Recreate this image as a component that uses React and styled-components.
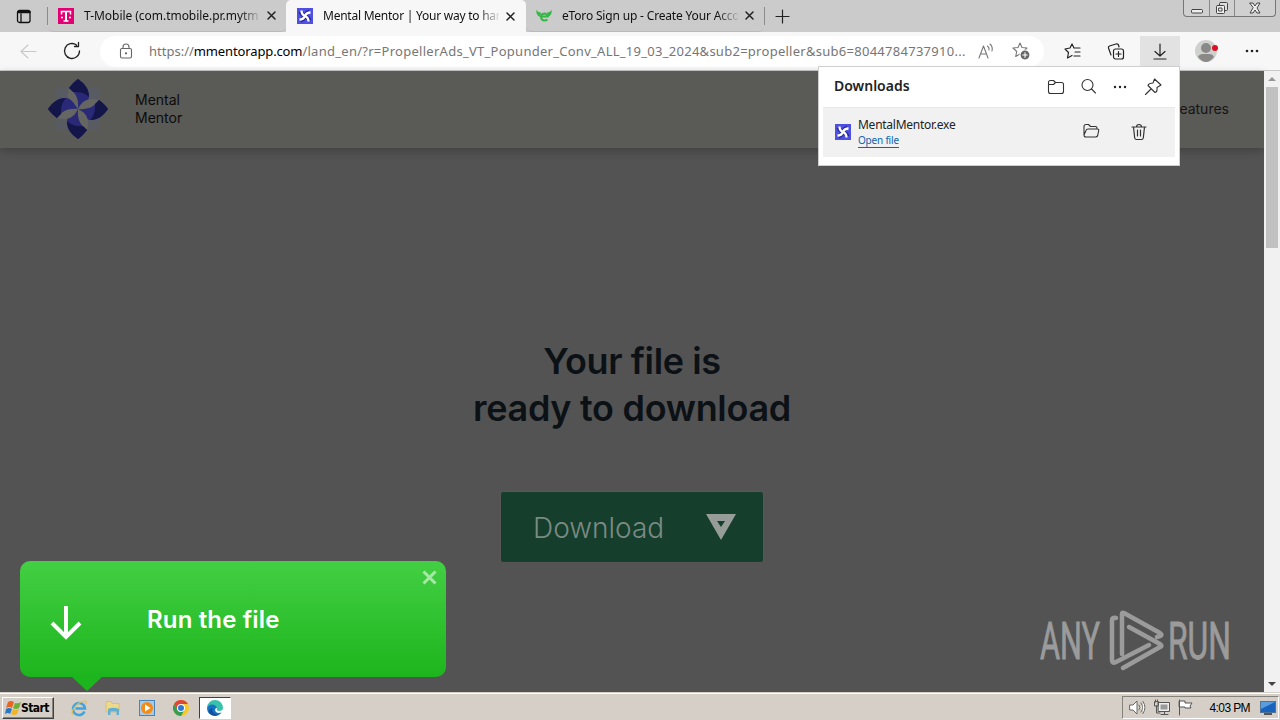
import React from "react";
import styled, { createGlobalStyle } from "styled-components";

const ui = '"Noto Sans", "Open Sans", sans-serif';
const site = 'Inter, "Open Sans", sans-serif';

const Global = createGlobalStyle`
  *{box-sizing:border-box}
  body{margin:0;width:1280px;height:720px;overflow:hidden;font-family:${ui};}
  svg{display:block;flex:none;overflow:visible}
`;

const Desktop = styled.div`width:1280px;height:720px;display:flex;flex-direction:column;position:relative;background:#535353;`;

/* ---------- tab strip ---------- */
const TabStrip = styled.div`height:32px;flex:none;display:flex;background:#cbcbcb;`;
const TabActions = styled.div`width:48px;display:flex;align-items:center;padding-left:16px;border-right:1px solid #8b8b8b;height:18px;margin-top:7px;`;
const Tab = styled.div`
  width:${(p) => p.$w}px;height:32px;display:flex;align-items:center;padding:0 ${(p) => p.$pr || 10}px 0 ${(p) => p.$pl}px;
  background:${(p) => (p.$active ? "#f7f7f7" : "#cbcbcb")};border-radius:${(p) => (p.$active ? "5px 5px 0 0" : "0 0 5px 5px")};
  ${(p) => !p.$active && "border-bottom:1px solid #bababa;"}
`;
const TabTitle = styled.div`
  width:176px;margin-left:10px;white-space:nowrap;font-size:12px;line-height:20px;color:#111;
  letter-spacing:${(p) => p.$ls}px;flex:none;
  mask-image:linear-gradient(90deg,#000 155px,transparent 178px);
`;
const CloseSlot = styled.div`margin-left:auto;`;
const NewTab = styled.div`height:18px;margin-top:7px;border-left:1px solid #8b8b8b;padding-left:10px;display:flex;align-items:center;`;
const WindowButtons = styled.div`margin:0 4px 0 auto;height:17px;display:flex;border:1px solid #777;border-top:0;border-radius:0 0 4px 4px;background:#d0d0d0;`;
const WindowButton = styled.div`width:${(p) => p.$w}px;display:flex;align-items:center;justify-content:center;& + &{border-left:1px solid #888;}`;

/* ---------- toolbar ---------- */
const Toolbar = styled.div`height:39px;flex:none;display:flex;align-items:center;background:#f7f7f7;border-bottom:1px solid #c7cac8;`;
const ToolSlot = styled.div`width:${(p) => p.$w}px;height:30px;display:flex;align-items:center;justify-content:center;background:${(p) => p.$bg || "transparent"};`;
const Address = styled.div`width:944px;height:31px;margin-left:7px;border-radius:16px;background:#fff;display:flex;align-items:center;padding:0 14px 0 19px;`;
const Url = styled.div`width:822px;margin-left:16px;white-space:nowrap;font-size:13px;line-height:20px;color:#767676;letter-spacing:.27px;b{font-weight:400;color:#000;letter-spacing:-.13px;}`;
const Scheme = styled.span`letter-spacing:0;`;
const AddressIcons = styled.div`display:flex;gap:17px;margin-left:auto;align-items:center;`;

/* ---------- page ---------- */
const Content = styled.div`flex:1;min-height:0;display:flex;`;
const Page = styled.main`width:1264px;background:#535353;font-family:${site};display:flex;flex-direction:column;align-items:center;`;
const PageHeader = styled.header`width:100%;height:77px;flex:none;display:flex;align-items:center;background:#5a5a56;padding:0 35px 2px 48px;box-shadow:0 3px 9px rgba(0,0,0,.22);`;
const Brand = styled.div`margin-left:27px;font-size:14px;line-height:18px;color:#0c0c0c;`;
const NavItem = styled.div`margin-left:auto;font-size:14px;color:#151515;`;
const Heading = styled.h1`margin:190px 0 0;font-size:36px;line-height:47px;font-weight:600;color:#0c1116;text-align:center;`;
const Line = styled.span`display:block;letter-spacing:${(p) => p.$ls}px;`;
const DownloadButton = styled.div`width:262px;height:70px;margin-top:60px;border-radius:2px;background:#153e2c;display:flex;align-items:center;padding:2px 27px 0 32px;justify-content:space-between;color:#7c8a82;font-size:28px;font-weight:300;box-shadow:0 0 2px #66605f;`;
const ButtonMark = styled.svg`margin-bottom:2px;`;

const Scrollbar = styled.div`width:16px;background:#f1f1f1;display:flex;flex-direction:column;align-items:center;`;
const ScrollArrow = styled.div`height:16px;display:flex;align-items:center;`;
const Thumb = styled.div`width:12px;height:161px;background:#c1c1c1;margin-bottom:auto;`;

/* ---------- downloads flyout ---------- */
const Flyout = styled.section`position:absolute;left:818px;top:66px;width:362px;height:100px;background:#fff;border:1px solid #cfcfcf;`;
const FlyoutHead = styled.div`height:40px;display:flex;align-items:center;padding:0 9px 1px 15px;`;
const FlyoutTitle = styled.div`font-size:14px;line-height:20px;font-weight:600;color:#222;margin-right:auto;padding-bottom:1px;`;
const FileRow = styled.div`height:50px;margin:0 4px;background:#f1f1f1;border-top:1px solid #e8e8e8;display:flex;align-items:center;padding:0 27px 2px 12px;`;
const FileText = styled.div`margin-left:7px;margin-right:auto;display:flex;flex-direction:column;align-items:flex-start;padding-top:2px;`;
const FileName = styled.div`font-size:12px;line-height:16px;color:#222;letter-spacing:-.26px;`;
const OpenLink = styled.div`font-size:10px;line-height:14px;color:#1064ad;border-bottom:1px solid #1064ad;letter-spacing:-.2px;`;
const FileActions = styled.div`display:flex;gap:30px;`;

/* ---------- run hint ---------- */
const Hint = styled.aside`position:absolute;left:20px;top:561px;width:426px;height:116px;border-radius:10px;background:linear-gradient(#43cf43,#1db51d);display:flex;align-items:center;padding:2px 0 0 30px;color:#fff;font:600 24px/30px ${site};
  &::after{content:"";position:absolute;left:51px;top:115px;border:solid transparent;border-width:15px 16px 0;border-top-color:#1db51d;}
`;
const HintText = styled.div`margin-left:65px;letter-spacing:.15px;`;
const HintClose = styled.div`position:absolute;right:9px;top:9px;`;
const Watermark = styled.div`position:absolute;left:1036px;top:608px;`;

/* ---------- taskbar ---------- */
const Taskbar = styled.footer`height:28px;flex:none;background:#d5cfc7;border-top:1px solid #d5cfc7;box-shadow:inset 0 1px #fff;display:flex;align-items:center;padding:2px 1px 0 2px;`;
const Start = styled.div`width:52px;height:22px;display:flex;align-items:center;padding-left:2px;border:1px solid;border-color:#fff #404040 #404040 #fff;box-shadow:inset -1px -1px #86827c;font:700 12px "DejaVu Sans Condensed","DejaVu Sans",sans-serif;letter-spacing:-.6px;color:#000;`;
const Launch = styled.div`display:flex;gap:18px;margin-left:17px;`;
const ActiveTask = styled.div`width:32px;height:22px;margin-left:10px;background:#fff;border:1px solid;border-color:#404040 #fff #fff #404040;display:flex;align-items:center;justify-content:center;`;
const Tray = styled.div`margin-left:auto;width:157px;height:23px;border:1px solid;border-color:#85817b #fff #fff #85817b;display:flex;align-items:center;padding:0 2px 0 6px;font:12px "Liberation Sans",sans-serif;color:#000;`;
const TrayIcons = styled.div`display:flex;gap:7px;`;
const Clock = styled.div`margin:0 10px 0 auto;letter-spacing:-.6px;white-space:nowrap;`;

const Svg = ({ w = 16, h = w, children, c = "#333", s = 1.1 }) => (
  <svg width={w} height={h} viewBox={`0 0 ${w} ${h}`} fill="none" stroke={c} strokeWidth={s} strokeLinecap="round" strokeLinejoin="round">{children}</svg>
);
const Cross = () => <Svg w={9} s={1.5} c="#222"><path d="M1 1l7 7M8 1L1 8" /></Svg>;
const Dots = ({ s = 1 }) => <Svg w={14} h={4}><g fill="#222" stroke="none"><circle cx="2" cy="2" r={s} /><circle cx="7" cy="2" r={s} /><circle cx="12" cy="2" r={s} /></g></Svg>;
const MentorIcon = () => (
  <svg width="16" height="16" viewBox="0 0 16 16"><rect width="16" height="16" fill="#5050e0" />
    <path d="M2.500 6Q5 4.500 8 8Q11 11.500 13.500 10M10 2.500Q11.500 5 8 8Q4.500 11 6 13.500" stroke="#2626a0" strokeWidth="4" fill="none" />
    <path d="M4.500 2.500Q4.500 6.500 8 8Q11.500 9.500 11.500 13.500M13.500 4.500Q9.500 4.500 8 8Q6.500 11.500 2.500 11.500" stroke="#fff" strokeWidth="2.300" fill="none" />
  </svg>
);
const MentorLogo = () => (
  <svg width="60" height="60" viewBox="0 0 60 60">
    <path d="M8 9H52V51H8Z" fill="#585b62" />
    {[0, 90, 180, 270].map((a) => (
      <g key={a} transform={`rotate(${a} 30 30)`}>
        <path d="M30 30C21 26 18 19 21 9C28 14 31 20 30 30Z" fill="#656561" />
        <path d="M30 30C31 20 28 14 21 9C24 5 27 2 30 0C37 5 41 10 41 17C41 24 35 26 30 30Z" fill="#292978" />
        <path d="M21 9C24 5 27 2 30 0C37 5 41 10 41 18C35 12 27 13 25 13Z" fill="#141548" />
      </g>
    ))}
  </svg>
);
const Folder = ({ open }) => (
  <Svg w={18} h={16}>
    {open ? <path d="M2 12V3.500Q2 1.500 4 1.500H6.500L8.500 3.500H13.500Q15 3.500 15 5V6M2 12L4 7.500Q4.500 6 6 6H15.500Q17 6 16.700 7.500L15.700 12.500Q15.300 14 13.500 14H4Q2 14 2 12" />
      : <path d="M1.500 3.500Q1.500 1.500 3.500 1.500H6.500L8.500 3.500H14.500Q16.500 3.500 16.500 5.500V12.500Q16.500 14.500 14.500 14.500H3.500Q1.500 14.500 1.500 12.500ZM1.500 5.500H6.500L8.500 3.500" />}
  </Svg>
);
const star = "M8 1L10 5.500L15 6L11.300 9.500L12.300 14.500L8 12L3.700 14.500L4.700 9.500L1 6L6 5.500Z";

export default function App() {
  return (
    <Desktop>
      <Global />
      <TabStrip>
        <TabActions><Svg w={15} h={15} s={1.3} c="#111"><rect x="1.500" y="1.500" width="12.500" height="12" rx="2" /><path d="M2 3.500H14M2 2.500h12M5 5V13" /></Svg></TabActions>
        <Tab $w={238} $pl={10}>
          <svg width="16" height="16"><rect width="16" height="16" fill="#e20074" /><path d="M3.500 6.500V3.500H12.500V6.500M5.500 13H10.500M3 9.500h2M11 9.500h2" stroke="#fff" strokeWidth="1.500" fill="none" /><path d="M8 3V13" stroke="#fff" strokeWidth="2" /></svg>
          <TabTitle $ls={-0.04}>T-Mobile (com.tmobile.pr.mytm</TabTitle><CloseSlot><Cross /></CloseSlot>
        </Tab>
        <Tab $w={240} $pl={11} $pr={11} $active><MentorIcon /><TabTitle $ls={-0.24}>Mental Mentor | Your way to harm</TabTitle><CloseSlot><Cross /></CloseSlot></Tab>
        <Tab $w={238} $pl={10}>
          <svg width="16" height="16"><path d="M.5 1.500Q1.500 4.500 5 4.500L4 9Q-.5 7 .5 1.500M15.500 1.500Q14.500 4.500 11 4.500L12 9Q16.500 7 15.500 1.500" fill="#35b748" /><path d="M5 8.500H11.500Q11 5.500 8.300 5.500Q5 5.800 5 9Q5.300 12.500 8.500 12.500Q10 12.500 11.500 11.500" stroke="#35b748" strokeWidth="2.100" fill="none" /></svg>
          <TabTitle $ls={-0.17}>eToro Sign up - Create Your Acco</TabTitle><CloseSlot><Cross /></CloseSlot>
        </Tab>
        <NewTab><Svg w={15} c="#222" s={1.2}><path d="M7.500 1V14M1 7.500H14" /></Svg></NewTab>
        <WindowButtons>
          <WindowButton $w={25}><Svg w={12} h={14} c="#444" s={1}><rect x=".5" y="8.500" width="11" height="3.500" rx="1" fill="#eee" /></Svg></WindowButton>
          <WindowButton $w={25}><Svg w={14} c="#444" s={1}><rect x="4.500" y="1.500" width="8" height="8" rx="1" fill="#ddd" /><rect x="1.500" y="4.500" width="8" height="8" rx="1" fill="#eee" /><rect x="4" y="7" width="3" height="3" /></Svg></WindowButton>
          <WindowButton $w={41}><Svg w={12} h={12} c="#444" s={1}><path d="M1 1H4L6 4L8 1H11L8 6L11 11H8L6 8L4 11H1L4 6Z" fill="#eee" /></Svg></WindowButton>
        </WindowButtons>
      </TabStrip>
      <Toolbar>
        <ToolSlot $w={56}><Svg w={17} c="#c8c8c8"><path d="M16 8.500H1M8 2L1 8.500L8 15" /></Svg></ToolSlot>
        <ToolSlot $w={31}><Svg w={18} c="#222" s={1.3}><path d="M16.500 9A7.500 7.500 0 1 1 13.500 3M11.500 4.500H15.500V.5" /></Svg></ToolSlot>
        <ToolSlot $w={6} />
        <Address>
          <Svg w={14} h={16} c="#666"><rect x="1.500" y="5.500" width="11" height="9.500" rx="1.500" /><path d="M4 5.500V4A3 3 0 0 1 10 4V5.500" /><circle cx="7" cy="10.300" r=".6" fill="#666" /></Svg>
          <Url><Scheme>https://</Scheme><b>mmentorapp.com</b>/land_en/?r=PropellerAds_VT_Popunder_Conv_ALL_19_03_2024&amp;sub2=propeller&amp;sub6=8044784737910...</Url>
          <AddressIcons>
            <Svg w={17} c="#777"><path d="M1 15L5.500 3L10 15M2.500 11H8.500M9.500 3Q11.500 4.500 11 7M12 1Q15 3.500 14 8" /></Svg>
            <Svg w={18} h={18} c="#777"><path d={star} /><circle cx="13" cy="13" r="5" fill="#666" stroke="#fff" /><path d="M13 10.800v4.400M10.800 13h4.400" stroke="#fff" /></Svg>
          </AddressIcons>
        </Address>
        <ToolSlot $w={7} />
        <ToolSlot $w={42}><Svg w={17} c="#222" s={1.2}><path d="M10 5L8 1L6 5L1 6L4.500 9.500L3.500 15L8 12.500M10 5H16M11 9H16M10 13H16" /></Svg></ToolSlot>
        <ToolSlot $w={45}><Svg w={17} h={17} c="#222" s={1.2}><rect x="6.500" y="6" width="10" height="10" rx="2" /><path d="M11.500 8.500v5M9 11h5M4 12L1.500 5Q1 3.500 2.500 3L9 1Q11 .5 11.500 2L12 4" /></Svg></ToolSlot>
        <ToolSlot $w={2} />
        <ToolSlot $w={40} $bg="#e2e2e2"><Svg w={14} h={17} c="#222" s={1.2}><path d="M7 1V13M2 8.500L7 13L12 8.500M1 16H13" /></Svg></ToolSlot>
        <ToolSlot $w={52}><Svg w={22}><circle cx="11" cy="11" r="11" fill="#cfd1cf" stroke="none" /><circle cx="11" cy="8" r="5" fill="#8b8987" stroke="none" /><path d="M3 17Q4 14 8 14H14Q18 14 19 17Q15 22 11 22Q7 22 3 17" fill="#8b8987" stroke="none" /><circle cx="20" cy="8" r="3" fill="#dc1025" stroke="none" /></Svg></ToolSlot>
        <ToolSlot $w={39}><Dots s={1.3} /></ToolSlot>
      </Toolbar>
      <Content>
        <Page>
          <PageHeader><MentorLogo /><Brand>Mental<br />Mentor</Brand><NavItem>Features</NavItem></PageHeader>
          <Heading><Line $ls={-0.4}>Your file is</Line><Line $ls={-0.3}>ready to download</Line></Heading>
          <DownloadButton>Download<ButtonMark width="30" height="26"><path fillRule="evenodd" d="M0 0H30L15 26ZM11 7H19L15 13Z" fill="#969c98" /></ButtonMark></DownloadButton>
        </Page>
        <Scrollbar>
          <ScrollArrow><svg width="8" height="4"><path d="M0 4L4 0L8 4Z" fill="#999" /></svg></ScrollArrow><Thumb />
          <ScrollArrow><svg width="8" height="4"><path d="M0 0L4 4L8 0Z" fill="#444" /></svg></ScrollArrow>
        </Scrollbar>
      </Content>
      <Flyout>
        <FlyoutHead>
          <FlyoutTitle>Downloads</FlyoutTitle>
          <ToolSlot $w={32}><Folder /></ToolSlot>
          <ToolSlot $w={32}><Svg w={17}><circle cx="7.500" cy="7" r="5.500" /><path d="M11.500 11L15.500 15" /></Svg></ToolSlot>
          <ToolSlot $w={32}><Dots s={1.2} /></ToolSlot>
          <ToolSlot $w={34}><Svg w={18}><path d="M10.500 1L17 7L13 9.500Q13.500 14 11 14.500L4 7.500Q5 5 9 5ZM7 11L1.500 16.500" /></Svg></ToolSlot>
        </FlyoutHead>
        <FileRow><MentorIcon /><FileText><FileName>MentalMentor.exe</FileName><OpenLink>Open file</OpenLink></FileText><FileActions><Folder open /><Svg w={18} h={18} s={1.2}><path d="M2 4H16M6.500 4Q6.500 1.500 9 1.500Q11.500 1.500 11.500 4M3.500 4L4.700 15Q5 16.500 6.500 16.500H11.500Q13 16.500 13.300 15L14.500 4M7.500 7V13M10.500 7V13" /></Svg></FileActions></FileRow>
      </Flyout>
      <Hint>
        <Svg w={32} h={34} c="#fff" s={4}><path d="M16 3V33M2 20L16 34L30 20" strokeLinecap="butt" strokeLinejoin="miter" /></Svg>
        <HintText>Run the file</HintText><HintClose><Svg w={15} c="#a6e8a6" s={3}><path d="M1.500 1.500L13.500 13.500M13.500 1.500L1.500 13.500" strokeLinecap="butt" /></Svg></HintClose>
      </Hint>
      <Watermark>
        <svg width="200" height="66" fill="#9b9b9b" stroke="#9b9b9b" strokeWidth=".9" fontFamily="Roboto, sans-serif" fontSize="51">
          <text x="4" y="51" textLength="60" lengthAdjust="spacingAndGlyphs">ANY</text><text x="132" y="51" textLength="63" lengthAdjust="spacingAndGlyphs">RUN</text>
          <g fill="none" strokeWidth="4.500" strokeLinecap="round" strokeLinejoin="round"><path d="M86 46V6Q86 4 88 5L124 25Q127 27 124 28L121 29M93 19L124 36Q127 38 124 39L87 60M80 10Q76 9 76 12V52Q76 56 80 54L113 37" /></g>
        </svg>
      </Watermark>
      <Taskbar>
        <Start><svg width="16" height="16"><path d="M3 2Q6 0 9 2L7 8Q4 6 1 8Z" fill="#e86524" /><path d="M10 3Q13 4 16 2L14 8Q11 10 8 8Z" fill="#70af35" /><path d="M1 9Q4 7 7 9L5 14Q3 12 0 14Z" fill="#2678c6" /><path d="M8 9Q11 11 14 9L12 14Q9 16 6 14Z" fill="#efb527" /></svg>Start</Start>
        <Launch>
          <svg width="16" height="16"><path d="M13.500 11.500A6 6 0 1 1 14 8.500H4.500" fill="none" stroke="#3fa5e0" strokeWidth="2.500" /><path d="M2 14.500Q-.5 13 3 8Q8 1.500 13.500 1Q16 1 15 4" fill="none" stroke="#e6bf4e" strokeWidth="1.200" /></svg>
          <svg width="16" height="16"><path d="M1 1.500H6L7 3.500H14V12H1Z" fill="#ecd98c" stroke="#c9ae5a" strokeWidth=".5" /><path d="M3 9Q8 6.500 14 9V15H11.500V11.500H5.500V15H3Z" fill="#62afd1" /></svg>
          <svg width="16" height="16"><rect x=".5" y=".5" width="15" height="15" fill="#aacbe8" stroke="#4385bc" /><circle cx="8" cy="8" r="6" fill="#f28b17" /><path d="M6 4.500L11.500 8L6 11.500Z" fill="#fff" /></svg>
          <svg width="16" height="16"><circle cx="8" cy="8" r="8" fill="#f6c928" /><path d="M1.070 4A8 8 0 0 1 14.930 4H8L4.500 10Z" fill="#dd4638" /><path d="M1.070 4A8 8 0 0 0 8 16L11.460 10H4.540Z" fill="#359d54" /><circle cx="8" cy="8" r="4" fill="#fff" /><circle cx="8" cy="8" r="3" fill="#3178d5" /></svg>
        </Launch>
        <ActiveTask><svg width="16" height="16"><path d="M0 8A8 8 0 0 1 16 8Q16 11 12 11Q9 11 10 8.500Q9 5 5 5Q2 5 0 8" fill="#38c2ae" /><path d="M0 8A8 8 0 0 0 14.500 12.500Q9 14 8 10Q8 8 10 8Q9 4.500 5 4.500Q1.500 4.500 0 8" fill="#1673c4" /><path d="M5 8Q5 14 11 14.500Q6 17.500 2 13Q1 9.500 5 8" fill="#134f9c" /></svg></ActiveTask>
        <Tray>
          <TrayIcons>
            <Svg w={17} c="#666" s={1}><path d="M1 6H4L8 2V15L4 11H1ZM10 6Q12 8.500 10 11M12 4Q15 8.500 12 13M14 2.500Q18 8.500 14 14.500" fill="#fff" /></Svg>
            <Svg w={17} c="#555" s={1}><rect x="5.500" y="3.500" width="11" height="9" fill="#eee" /><rect x="7.500" y="5.500" width="7" height="5" fill="#999" stroke="none" /><path d="M8 15.500H15M11.500 13V15M1.500 3V7H5.500V3ZM3.500 7V14H7M2.500 1V3M4.500 1V3" /></Svg>
            <Svg w={17} c="#555" s={1}><path d="M2.500 1V16M2.500 2H8V4H15L13 7L14 9H8V8H2.500Z" fill="#fff" /></Svg>
          </TrayIcons>
          <Clock>4:03 PM</Clock>
          <svg width="16" height="14"><rect x=".5" y=".5" width="15" height="11" fill="#1763bd" stroke="#527494" /><path d="M1 1H15L1 8Z" fill="#5a9ddf" /><path d="M4 13H12" stroke="#555" strokeWidth="2" /></svg>
        </Tray>
      </Taskbar>
    </Desktop>
  );
}
